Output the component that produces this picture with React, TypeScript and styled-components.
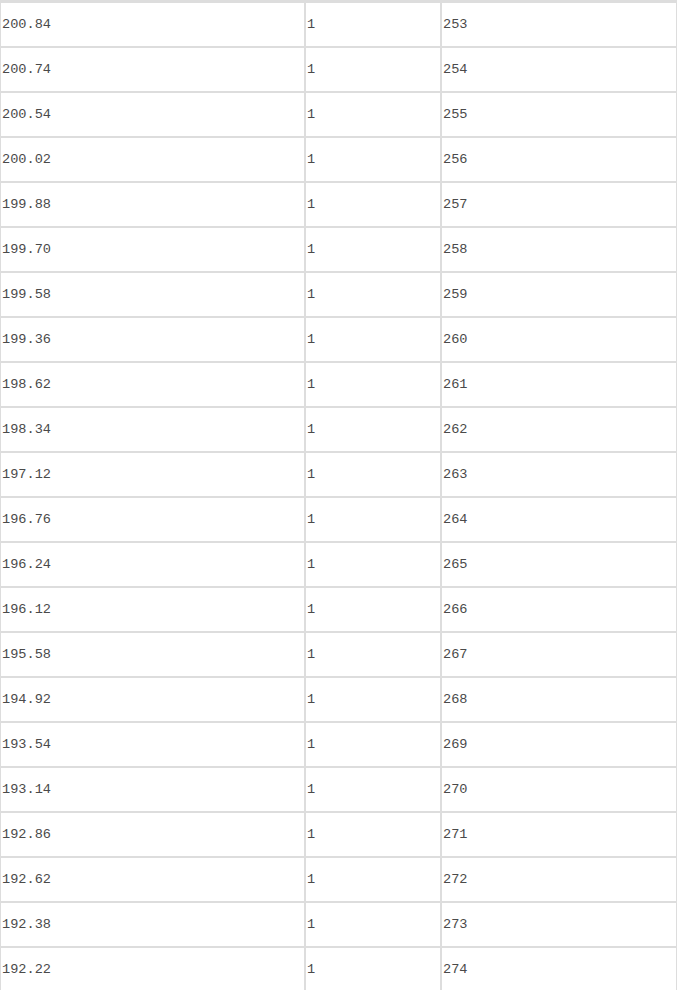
import styled, { createGlobalStyle } from "styled-components";

const GlobalStyle = createGlobalStyle`
  html, body {
    margin: 0;
    padding: 0;
    background: #ffffff;
  }
  body {
    font-family: "Liberation Mono", "DejaVu Sans Mono", monospace;
  }
`;

const lineColor = "#dddddd";

const Table = styled.div`
  width: 677px;
  display: flex;
  flex-direction: column;
  border-top: 2px solid ${lineColor};
`;

const Row = styled.div`
  display: grid;
  grid-template-columns: 305px 136px 236px;
  height: 45px;
`;

const Cell = styled.div`
  box-sizing: border-box;
  height: 45px;
  display: flex;
  align-items: center;
  padding-left: 1px;
  border: 1px solid ${lineColor};
  font-size: 13.6px;
  color: #4a4a4a;
  white-space: nowrap;
`;

const prices = [
  "200.84",
  "200.74",
  "200.54",
  "200.02",
  "199.88",
  "199.70",
  "199.58",
  "199.36",
  "198.62",
  "198.34",
  "197.12",
  "196.76",
  "196.24",
  "196.12",
  "195.58",
  "194.92",
  "193.54",
  "193.14",
  "192.86",
  "192.62",
  "192.38",
  "192.22",
];

export default function App() {
  return (
    <>
      <GlobalStyle />
      <Table>
        {prices.map((price, idx) => (
          <Row key={price}>
            <Cell>{price}</Cell>
            <Cell>1</Cell>
            <Cell>{253 + idx}</Cell>
          </Row>
        ))}
      </Table>
    </>
  );
}
